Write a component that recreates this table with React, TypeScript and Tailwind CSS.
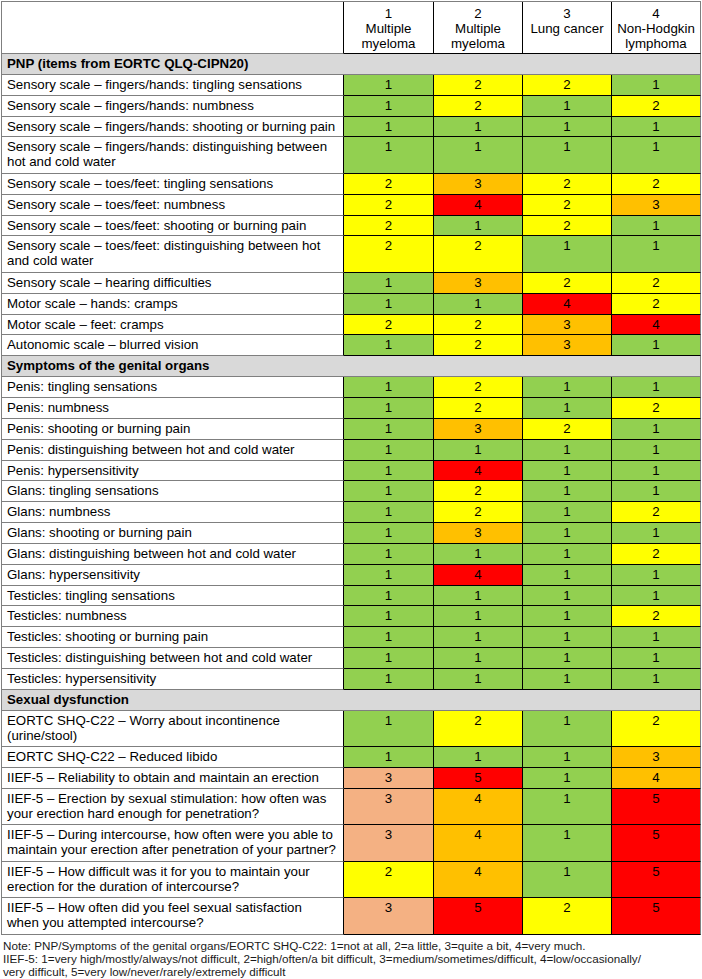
type Row = { label: string; vals: number[]; tall?: boolean; iief?: boolean };
type Section = { title: string; rows: Row[] };

const sections: Section[] = [
  {
    title: "PNP (items from EORTC QLQ-CIPN20)",
    rows: [
      { label: "Sensory scale – fingers/hands: tingling sensations", vals: [1, 2, 2, 1] },
      { label: "Sensory scale – fingers/hands: numbness", vals: [1, 2, 1, 2] },
      { label: "Sensory scale – fingers/hands: shooting or burning pain", vals: [1, 1, 1, 1] },
      { label: "Sensory scale – fingers/hands: distinguishing between\nhot and cold water", vals: [1, 1, 1, 1], tall: true },
      { label: "Sensory scale – toes/feet: tingling sensations", vals: [2, 3, 2, 2] },
      { label: "Sensory scale – toes/feet: numbness", vals: [2, 4, 2, 3] },
      { label: "Sensory scale – toes/feet: shooting or burning pain", vals: [2, 1, 2, 1] },
      { label: "Sensory scale – toes/feet: distinguishing between hot\nand cold water", vals: [2, 2, 1, 1], tall: true },
      { label: "Sensory scale – hearing difficulties", vals: [1, 3, 2, 2] },
      { label: "Motor scale – hands: cramps", vals: [1, 1, 4, 2] },
      { label: "Motor scale – feet: cramps", vals: [2, 2, 3, 4] },
      { label: "Autonomic scale – blurred vision", vals: [1, 2, 3, 1] },
    ],
  },
  {
    title: "Symptoms of the genital organs",
    rows: [
      { label: "Penis: tingling sensations", vals: [1, 2, 1, 1] },
      { label: "Penis: numbness", vals: [1, 2, 1, 2] },
      { label: "Penis: shooting or burning pain", vals: [1, 3, 2, 1] },
      { label: "Penis: distinguishing between hot and cold water", vals: [1, 1, 1, 1] },
      { label: "Penis: hypersensitivity", vals: [1, 4, 1, 1] },
      { label: "Glans: tingling sensations", vals: [1, 2, 1, 1] },
      { label: "Glans: numbness", vals: [1, 2, 1, 2] },
      { label: "Glans: shooting or burning pain", vals: [1, 3, 1, 1] },
      { label: "Glans: distinguishing between hot and cold water", vals: [1, 1, 1, 2] },
      { label: "Glans: hypersensitivity", vals: [1, 4, 1, 1] },
      { label: "Testicles: tingling sensations", vals: [1, 1, 1, 1] },
      { label: "Testicles: numbness", vals: [1, 1, 1, 2] },
      { label: "Testicles: shooting or burning pain", vals: [1, 1, 1, 1] },
      { label: "Testicles: distinguishing between hot and cold water", vals: [1, 1, 1, 1] },
      { label: "Testicles: hypersensitivity", vals: [1, 1, 1, 1] },
    ],
  },
  {
    title: "Sexual dysfunction",
    rows: [
      { label: "EORTC SHQ-C22 – Worry about incontinence\n(urine/stool)", vals: [1, 2, 1, 2], tall: true },
      { label: "EORTC SHQ-C22 – Reduced libido", vals: [1, 1, 1, 3] },
      { label: "IIEF-5 – Reliability to obtain and maintain an erection", vals: [3, 5, 1, 4], iief: true },
      { label: "IIEF-5 – Erection by sexual stimulation: how often was\nyour erection hard enough for penetration?", vals: [3, 4, 1, 5], tall: true, iief: true },
      { label: "IIEF-5 – During intercourse, how often were you able to\nmaintain your erection after penetration of your partner?", vals: [3, 4, 1, 5], tall: true, iief: true },
      { label: "IIEF-5 – How difficult was it for you to maintain your\nerection for the duration of intercourse?", vals: [2, 4, 1, 5], tall: true, iief: true },
      { label: "IIEF-5 – How often did you feel sexual satisfaction\nwhen you attempted intercourse?", vals: [3, 5, 2, 5], tall: true, iief: true },
    ],
  },
];

const eortcColors: Record<number, string> = {
  1: "bg-[#92d050]",
  2: "bg-[#ffff00]",
  3: "bg-[#ffc000]",
  4: "bg-[#ff0000]",
};

const iiefColors: Record<number, string> = {
  1: "bg-[#92d050]",
  2: "bg-[#ffff00]",
  3: "bg-[#f4b183]",
  4: "bg-[#ffc000]",
  5: "bg-[#ff0000]",
};

const headers = [
  ["1", "Multiple", "myeloma"],
  ["2", "Multiple", "myeloma"],
  ["3", "Lung cancer", ""],
  ["4", "Non-Hodgkin", "lymphoma"],
];

const cols = "grid grid-cols-[342px_90px_89px_89px_89px]";

const App = () => {
  return (
    <div className="w-[702px] bg-white text-black font-['Liberation_Sans',Arial,sans-serif]">
      <div className="ml-[1px] mt-[1px] w-[700px] border-l border-t border-[#7f7f7f] text-[13.3px] leading-[15px]">
        {/* header */}
        <div className={`${cols} h-[52px]`}>
          <div className="border-r border-b border-r-black border-b-[#7f7f7f]" />
          {headers.map((h, i) => (
            <div
              key={i}
              className={`border-b border-r border-black pt-[4px] text-center ${i === 3 ? "border-r-[#7f7f7f]" : ""}`}
            >
              {h.map((line, j) => (
                <div key={j} className="h-[15px]">
                  {line}
                </div>
              ))}
            </div>
          ))}
        </div>

        {sections.map((s) => (
          <div key={s.title}>
            <div className="h-[20.85px] bg-[#d9d9d9] border-r border-b border-[#7f7f7f] pl-[5px] pt-[2px] font-bold">
              {s.title}
            </div>
            {s.rows.map((r) => (
              <div key={r.label} className={`${cols} ${r.tall ? "h-[36.5px]" : "h-[20.85px]"}`}>
                <div className="border-r border-b border-r-black border-b-[#7f7f7f] pl-[5px] pt-[2px] whitespace-pre-line">
                  {r.label}
                </div>
                {r.vals.map((v, i) => (
                  <div
                    key={i}
                    className={`border-r border-b border-black text-center pt-[2px] ${
                      r.iief ? iiefColors[v] : eortcColors[v]
                    } ${i === 3 ? "border-r-[#7f7f7f]" : ""}`}
                  >
                    {v}
                  </div>
                ))}
              </div>
            ))}
          </div>
        ))}
      </div>

      <p className="mt-[4px] pl-[3px] text-[11.7px] leading-[13px] text-[#1a1a1a] whitespace-nowrap">
        Note: PNP/Symptoms of the genital organs/EORTC SHQ-C22: 1=not at all, 2=a little, 3=quite a bit, 4=very much.
        <br />
        IIEF-5: 1=very high/mostly/always/not difficult, 2=high/often/a bit difficult, 3=medium/sometimes/difficult, 4=low/occasionally/
        <br />
        very difficult, 5=very low/never/rarely/extremely difficult
      </p>
    </div>
  );
};

export default App;
